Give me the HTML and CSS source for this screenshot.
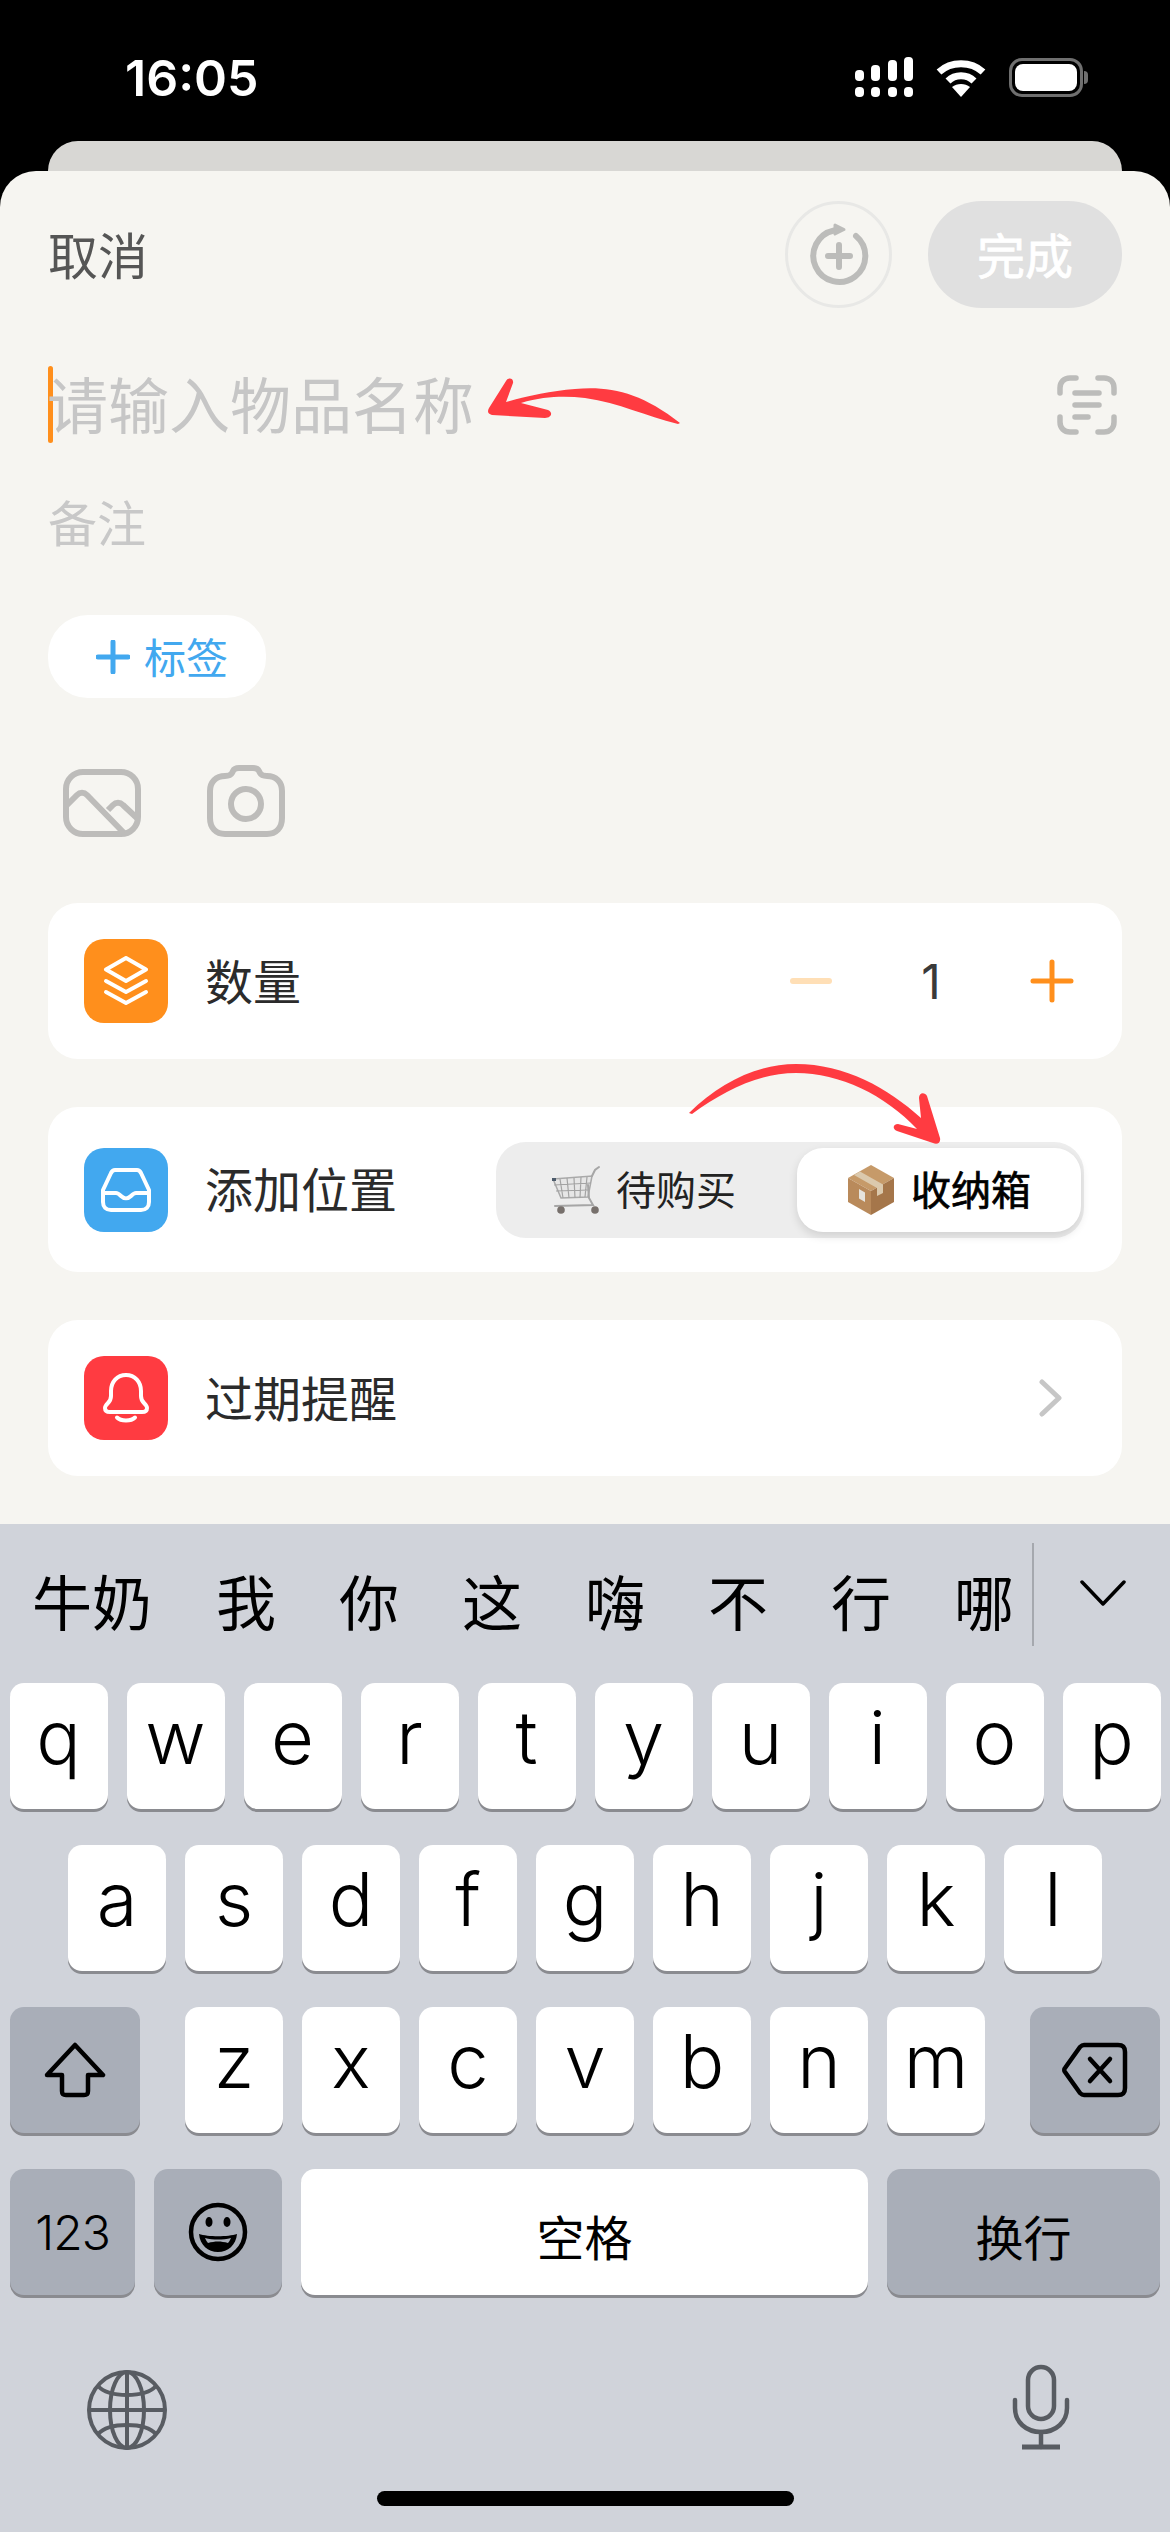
FILE: index.html
```html
<!DOCTYPE html>
<html lang="zh-CN">
<head>
    <meta charset="UTF-8">
    <meta name="viewport" content="width=device-width, initial-scale=1.0">
    <title>添加物品</title>
    <link rel="stylesheet" href="styles.css">
</head>
<body>
    <header class="status-bar">
        <span class="time">16:05</span>
        <div class="status-icons">
            <svg class="signal" width="58" height="40" viewBox="0 0 58 40" fill="#fff">
                <rect x="0" y="13" width="9" height="11" rx="4"/>
                <rect x="16" y="8" width="9" height="16" rx="4"/>
                <rect x="33" y="3" width="9" height="21" rx="4"/>
                <rect x="49" y="0" width="9" height="24" rx="4"/>
                <rect x="0" y="30" width="9" height="10" rx="4"/>
                <rect x="16" y="30" width="9" height="10" rx="4"/>
                <rect x="33" y="30" width="9" height="10" rx="4"/>
                <rect x="49" y="30" width="9" height="10" rx="4"/>
            </svg>
            <svg class="wifi" width="50" height="38" viewBox="0 0 50 38" fill="none" stroke="#fff" stroke-width="7">
                <path d="M3 13C15 2 35 2 47 13"/>
                <path d="M12 22C19 15 31 15 38 22"/>
                <path d="M25 38L16 28C21 24 29 24 34 28Z" fill="#fff" stroke="none"/>
            </svg>
            <div class="battery"><div class="battery-fill"></div></div>
            <div class="battery-nub"></div>
        </div>
    </header>

    <div class="back-sheet"></div>

    <main class="sheet">
        <div class="top-row">
            <span class="cancel">取消</span>
            <div class="top-actions">
                <div class="round-btn">
                    <svg width="60" height="64" viewBox="0 0 60 64" fill="none" stroke="#bcbcba" stroke-width="6" stroke-linecap="round" stroke-linejoin="round">
                        <path d="M47 13A26 26 0 1 1 25 7.5"/>
                        <path d="M26 2L35 6.5L26 11Z" fill="#bcbcba" stroke-width="3"/>
                        <path d="M30 22V44M19 33H41"/>
                    </svg>
                </div>
                <div class="done-btn">完成</div>
            </div>
        </div>

        <div class="name-row">
            <div class="caret"></div>
            <span class="placeholder">请输入物品名称</span>
            <svg class="scan" width="60" height="60" viewBox="0 0 60 60" fill="none" stroke="#bcbcba" stroke-width="5.5" stroke-linecap="round">
                <path d="M3 18V13C3 7 7 3 13 3H19M41 3H47C53 3 57 7 57 13V18M57 42V47C57 53 53 57 47 57H41M19 57H13C7 57 3 53 3 47V42"/>
                <path d="M18 18H42M18 30H42M18 42H31"/>
            </svg>
        </div>

        <div class="note">备注</div>

        <div class="tag-pill">
            <svg width="34" height="34" viewBox="0 0 34 34" stroke="#42a8ef" stroke-width="5" stroke-linecap="round">
                <path d="M17 2V32M2 17H32"/>
            </svg>
            <span class="tag-text">标签</span>
        </div>

        <div class="media-row">
            <svg width="78" height="68" viewBox="0 0 78 68" fill="none" stroke="#bdbcba" stroke-width="6" stroke-linejoin="round">
                <rect x="3" y="3" width="72" height="62" rx="17"/>
                <path d="M3 37L14 26C17 23 21 23 24 26L61 64"/>
                <path d="M45 41L50 36C53 33 57 33 60 36L75 50"/>
            </svg>
            <svg width="78" height="72" viewBox="0 0 78 72" fill="none" stroke="#bdbcba" stroke-width="6" stroke-linejoin="round">
                <path d="M18 11C22 11 24 10 25 8L26 6C27 4 29 3 32 3H46C49 3 51 4 52 6L53 8C54 10 56 11 60 11C69 11 75 17 75 26V53C75 63 69 69 60 69H18C9 69 3 63 3 53V26C3 17 9 11 18 11Z"/>
                <circle cx="39" cy="39" r="15"/>
            </svg>
        </div>

        <section class="card card-qty">
            <div class="card-icon icon-orange">
                <svg width="46" height="50" viewBox="0 0 46 50" fill="none" stroke="#fff" stroke-width="4" stroke-linecap="round" stroke-linejoin="round">
                    <path d="M23 2L43 13.5L23 25L3 13.5Z"/>
                    <path d="M3 25L23 36L43 25"/>
                    <path d="M3 36L23 47L43 36"/>
                </svg>
            </div>
            <span class="card-label">数量</span>
            <div class="stepper">
                <div class="step-minus"></div>
                <span class="step-value">1</span>
                <svg width="44" height="44" viewBox="0 0 44 44" stroke="#ff8f1c" stroke-width="5" stroke-linecap="round">
                    <path d="M22 3V41M3 22H41"/>
                </svg>
            </div>
        </section>

        <section class="card card-place">
            <div class="card-icon icon-blue">
                <svg width="50" height="44" viewBox="0 0 50 44" fill="none" stroke="#fff" stroke-width="4" stroke-linejoin="round">
                    <path d="M14 2H36C38 2 39 3 40 5L48 22V34C48 39 45 42 40 42H10C5 42 2 39 2 34V22L10 5C11 3 12 2 14 2Z"/>
                    <path d="M2 25H15C17 25 18 26 20 28C23 31 27 31 30 28C32 26 33 25 35 25H48"/>
                </svg>
            </div>
            <span class="card-label">添加位置</span>
            <div class="segment">
                <div class="seg-item seg-idle">
                    <svg width="50" height="50" viewBox="0 0 50 50" fill="none">
                        <path d="M1 14L40 11L36 32L9 33Z" fill="#e6e6e6" stroke="#a9a9a9" stroke-width="1.5"/>
                        <path d="M8 14L11 33M15 13L17 33M22 13L23 33M29 12L28 33M35 12L33 32M2 20L39 18M4 26L37 25" stroke="#a3a3a3" stroke-width="1.2"/>
                        <path d="M40 11L43 5L47 2M36 20L37 33L41 40L3 41" stroke="#a6a6a6" stroke-width="2" stroke-linecap="round"/>
                        <circle cx="9" cy="45" r="3.8" fill="#77706c"/>
                        <circle cx="43" cy="45" r="3.8" fill="#77706c"/>
                        <rect x="0" y="13" width="4" height="3" fill="#4d5b6b"/>
                    </svg>
                    <span class="seg-text">待购买</span>
                </div>
                <div class="seg-item seg-active">
                    <svg width="48" height="50" viewBox="0 0 48 50">
                        <path d="M24 0L47 13L24 26L1 13Z" fill="#c69a69"/>
                        <path d="M1 13L24 26V50L1 37Z" fill="#b98a5b"/>
                        <path d="M47 13L24 26V50L47 37Z" fill="#a5764a"/>
                        <path d="M13 6.5L36 19.5L36 28L30 31V23L7 10Z" fill="#dbc9ad"/>
                        <path d="M12 24L18 27.5V37L12 33.5Z" fill="#e6e3dc"/>
                    </svg>
                    <span class="seg-text">收纳箱</span>
                </div>
            </div>
        </section>

        <section class="card card-expire">
            <div class="card-icon icon-red">
                <svg width="46" height="50" viewBox="0 0 46 50" fill="none" stroke="#fff" stroke-width="4" stroke-linecap="round" stroke-linejoin="round">
                    <path d="M23 2C32 2 38 9 38 18V23C38 26 39 28 41 30C43 32 44 34 44 35C44 38 42 39 39 39H7C4 39 2 38 2 35C2 34 3 32 5 30C7 28 8 26 8 23V18C8 9 14 2 23 2Z"/>
                    <path d="M14 44.5C18 48.5 28 48.5 32 44.5"/>
                </svg>
            </div>
            <span class="card-label">过期提醒</span>
            <svg class="chevron" width="24" height="38" viewBox="0 0 24 38" fill="none" stroke="#c6c6c6" stroke-width="5" stroke-linecap="round" stroke-linejoin="round">
                <path d="M3 3L20 19L3 35"/>
            </svg>
        </section>
    </main>

    <section class="keyboard">
        <div class="candidates">
            <span class="cand cand-first">牛奶</span>
            <span class="cand">我</span>
            <span class="cand">你</span>
            <span class="cand">这</span>
            <span class="cand">嗨</span>
            <span class="cand">不</span>
            <span class="cand">行</span>
            <span class="cand">哪</span>
            <div class="cand-more">
                <svg width="46" height="26" viewBox="0 0 46 26" fill="none" stroke="#000" stroke-width="3.5" stroke-linecap="round" stroke-linejoin="round">
                    <path d="M2 2L23 24L44 2"/>
                </svg>
            </div>
        </div>

        <div class="keys">
            <div class="key-row">
                <div class="key">q</div><div class="key">w</div><div class="key">e</div><div class="key">r</div><div class="key">t</div>
                <div class="key">y</div><div class="key">u</div><div class="key">i</div><div class="key">o</div><div class="key">p</div>
            </div>
            <div class="key-row">
                <div class="key">a</div><div class="key">s</div><div class="key">d</div><div class="key">f</div><div class="key">g</div>
                <div class="key">h</div><div class="key">j</div><div class="key">k</div><div class="key">l</div>
            </div>
            <div class="key-row row-split">
                <div class="key key-dark key-side">
                    <svg width="62" height="56" viewBox="0 0 62 56" fill="none" stroke="#000" stroke-width="4.5" stroke-linejoin="round">
                        <path d="M31 3L59 33H44V49C44 52 43 53 40 53H22C19 53 18 52 18 49V33H3Z"/>
                    </svg>
                </div>
                <div class="key-group">
                    <div class="key">z</div><div class="key">x</div><div class="key">c</div><div class="key">v</div>
                    <div class="key">b</div><div class="key">n</div><div class="key">m</div>
                </div>
                <div class="key key-dark key-side">
                    <svg width="66" height="56" viewBox="0 0 66 56" fill="none" stroke="#000" stroke-width="4.5" stroke-linejoin="round" stroke-linecap="round">
                        <path d="M22 3H56C61 3 63 5 63 10V46C63 51 61 53 56 53H22C20 53 19 52 18 51L3 30C2 29 2 27 3 26L18 5C19 4 20 3 22 3Z"/>
                        <path d="M28 17L48 39M48 17L28 39"/>
                    </svg>
                </div>
            </div>
            <div class="key-row">
                <div class="key key-dark key-num">123</div>
                <div class="key key-dark key-emoji">
                    <svg width="60" height="60" viewBox="0 0 60 60" fill="none" stroke="#000" stroke-width="4.5">
                        <circle cx="30" cy="30" r="27"/>
                        <ellipse cx="21" cy="20" rx="3.5" ry="5" fill="#000" stroke="none"/>
                        <ellipse cx="39" cy="20" rx="3.5" ry="5" fill="#000" stroke="none"/>
                        <path d="M11 32C20 35 40 35 49 32C48 43 40 50 30 50C20 50 12 43 11 32Z" fill="#000" stroke="none"/>
                        <path d="M17 36C25 38 35 38 43 36C42 38 41 40 40 41C33 39 27 39 20 41C19 40 18 38 17 36Z" fill="#a9aeb8" stroke="none"/>
                    </svg>
                </div>
                <div class="key key-space">空格</div>
                <div class="key key-dark key-return">换行</div>
            </div>
        </div>

        <div class="kb-bottom">
            <svg width="80" height="80" viewBox="0 0 80 80" fill="none" stroke="#585c62" stroke-width="4">
                <circle cx="40" cy="40" r="38"/>
                <ellipse cx="40" cy="40" rx="17" ry="38"/>
                <path d="M40 2V78M2 40H78"/>
                <path d="M11 16C22 28 58 28 69 16M11 64C22 52 58 52 69 64"/>
            </svg>
            <svg width="58" height="86" viewBox="0 0 58 86" fill="none" stroke="#585c62" stroke-width="4.5" stroke-linecap="round">
                <rect x="16" y="3" width="26" height="52" rx="13"/>
                <path d="M3 36V44C3 58 14 68 29 68C44 68 55 58 55 44V36"/>
                <path d="M29 68V83"/>
                <path d="M10 83H48" stroke-linecap="butt" stroke-width="5"/>
            </svg>
        </div>
        <div class="home-bar"></div>
    </section>

    <svg class="annotations" width="1170" height="2532" viewBox="0 0 1170 2532" fill="#ff3b41">
        <path d="M680 423C640 392 610 386 575 389C550 391 528 396 506 402L513 383C514 378 508 377 506 381L489 408C487 412 488 414 492 415L545 418C552 418 553 412 548 410L521 403C545 396 565 396 585 398C620 403 645 416 678 424Z"/>
        <path d="M689 1113C720 1082 758 1064 796 1064C845 1064 888 1088 921 1118L919 1098C919 1092 925 1092 927 1096L940 1138C941 1143 937 1145 933 1143L897 1131C892 1129 893 1124 898 1124L917 1129C885 1095 840 1073 796 1073C760 1073 725 1090 692 1114Z"/>
    </svg>
</body>
</html>
```

FILE: styles.css
```css
* {
    box-sizing: border-box;
}

body {
    position: relative;
    margin: 0;
    width: 1170px;
    height: 2532px;
    overflow: hidden;
    background-color: #000;
    font-family: "Liberation Sans", "Noto Sans CJK SC", sans-serif;
    color: #000;
}

.status-bar {
    height: 141px;
    padding: 0 82px 0 125px;
    display: flex;
    justify-content: space-between;
    align-items: flex-start;
    color: #fff;
}

.time {
    margin-top: 49px;
    font-family: Inter, sans-serif;
    font-size: 50px;
    line-height: 58px;
    font-weight: 600;
}

.status-icons {
    margin-top: 57px;
    display: flex;
    align-items: flex-start;
}

.wifi {
    margin: 2px 0 0 23px;
}

.battery {
    width: 74px;
    height: 39px;
    margin: 1px 0 0 23px;
    padding: 3px;
    border: 3px solid #6f6f6f;
    border-radius: 13px;
}

.battery-fill {
    height: 100%;
    background-color: #fff;
    border-radius: 8px;
}

.battery-nub {
    width: 4px;
    height: 13px;
    margin: 14px 0 0 1px;
    background-color: #6f6f6f;
    border-radius: 0 4px 4px 0;
}

.back-sheet {
    height: 30px;
    margin: 0 48px;
    background-color: #d8d7d4;
    border-radius: 30px 30px 0 0;
}

.sheet {
    height: 1353px;
    padding: 30px 48px 0;
    background-color: #f6f5f1;
    border-radius: 36px 36px 0 0;
}

.top-row {
    height: 107px;
    display: flex;
    justify-content: space-between;
    align-items: center;
}

.cancel {
    padding-bottom: 4px;
    font-size: 50px;
    color: #555;
}

.top-actions {
    display: flex;
    gap: 36px;
}

.round-btn {
    width: 107px;
    height: 107px;
    display: flex;
    align-items: center;
    justify-content: center;
    border: 3px solid #e8e8e6;
    border-radius: 50%;
}

.done-btn {
    width: 194px;
    height: 107px;
    padding-bottom: 3px;
    display: flex;
    align-items: center;
    justify-content: center;
    background-color: #e0e0e0;
    border-radius: 54px;
    font-size: 48px;
    color: #fff;
    -webkit-text-stroke: 0.8px #fff;
}

.name-row {
    height: 77px;
    margin-top: 58px;
    display: flex;
    align-items: center;
}

.caret {
    width: 5px;
    height: 77px;
    background-color: #ff8f1c;
    border-radius: 3px;
}

.placeholder {
    margin-left: -6px;
    padding-bottom: 5px;
    font-size: 61px;
    color: #c6c6c6;
}

.scan {
    margin-left: auto;
    margin-right: 5px;
}

.note {
    margin-top: 56px;
    font-size: 49px;
    line-height: 52px;
    color: #c8c8c8;
}

.tag-pill {
    width: 218px;
    height: 83px;
    margin-top: 64px;
    padding-left: 10px;
    display: flex;
    align-items: center;
    justify-content: center;
    gap: 14px;
    background-color: #fff;
    border-radius: 40px;
    font-size: 42px;
    color: #42a8ef;
}

.tag-text {
    padding-bottom: 3px;
}

.media-row {
    margin-top: 67px;
    padding-left: 15px;
    display: flex;
    align-items: flex-end;
    gap: 66px;
}

.card {
    margin-top: 48px;
    padding: 0 36px;
    display: flex;
    align-items: center;
    background-color: #fff;
    border-radius: 30px;
}

.media-row + .card {
    margin-top: 66px;
}

.card-qty {
    height: 156px;
}

.card-place {
    height: 165px;
    padding-right: 38px;
}

.card-expire {
    height: 156px;
    padding-right: 59px;
}

.card-icon {
    width: 84px;
    height: 84px;
    display: flex;
    align-items: center;
    justify-content: center;
    border-radius: 20px;
}

.icon-orange {
    background-color: #ff8f1c;
}

.icon-blue {
    background-color: #42a8ef;
}

.icon-red {
    background-color: #ff3b41;
}

.card-label {
    margin-left: 37px;
    padding-bottom: 5px;
    font-size: 48px;
    color: #2b2b2b;
}

.stepper {
    margin-left: auto;
    margin-right: 12px;
    display: flex;
    align-items: center;
}

.step-minus {
    width: 42px;
    height: 6px;
    background-color: #ffdfb6;
    border-radius: 3px;
}

.step-value {
    width: 198px;
    text-align: center;
    font-family: Inter, sans-serif;
    font-size: 48px;
    color: #3a3a3a;
}

.segment {
    width: 588px;
    height: 96px;
    margin-left: auto;
    padding: 6px 3px 6px 0;
    display: flex;
    background-color: #ededed;
    border-radius: 30px;
}

.seg-item {
    flex: 1;
    display: flex;
    align-items: center;
    justify-content: center;
    gap: 16px;
    font-size: 40px;
    color: #222;
}

.seg-idle {
    gap: 14px;
    padding-right: 5px;
}

.seg-text {
    padding-bottom: 4px;
}

.seg-active {
    flex: none;
    width: 284px;
    background-color: #fff;
    border-radius: 26px;
    box-shadow: 0 4px 10px rgba(0, 0, 0, 0.12);
    color: #000;
    -webkit-text-stroke: 0.7px #000;
}

.chevron {
    margin-left: auto;
}

.keyboard {
    height: 1008px;
    background-color: #d0d3da;
}

.candidates {
    height: 159px;
    padding: 0 0 8px 32px;
    display: flex;
    align-items: center;
    font-size: 60px;
    color: #000;
}

.cand {
    width: 60px;
    margin-right: 63px;
    text-align: center;
}

.cand-first {
    width: 120px;
    margin-right: 64px;
}

.cand-more {
    height: 103px;
    margin: 19px 0 0 -45px;
    padding: 37px 0 0 46px;
    display: flex;
    align-items: flex-start;
    align-self: flex-start;
    border-left: 2px solid #a5a8ae;
}

.keys {
    display: flex;
    flex-direction: column;
    gap: 36px;
}

.key-row {
    display: flex;
    justify-content: center;
    gap: 19px;
}

.row-split {
    justify-content: space-between;
    padding: 0 10px;
}

.key-group {
    display: flex;
    gap: 19px;
}

.key {
    width: 98px;
    height: 126px;
    padding-bottom: 18px;
    display: flex;
    align-items: center;
    justify-content: center;
    background-color: #fff;
    border-radius: 14px;
    box-shadow: 0 3px 0 #8a8b90;
    font-family: Inter, sans-serif;
    font-size: 74px;
    font-weight: 300;
}

.key-dark {
    background-color: #a9aeb8;
}

.key-side {
    width: 130px;
    padding-bottom: 0;
}

.key-num {
    width: 125px;
    padding-bottom: 0;
    font-size: 48px;
    letter-spacing: -1px;
}

.key-emoji {
    width: 128px;
    padding-bottom: 0;
}

.key-space {
    width: 567px;
    padding: 5px 0 0;
    font-family: "Liberation Sans", "Noto Sans CJK SC", sans-serif;
    font-size: 48px;
    font-weight: 400;
}

.key-return {
    width: 273px;
    padding: 5px 0 0;
    font-family: "Liberation Sans", "Noto Sans CJK SC", sans-serif;
    font-size: 48px;
    font-weight: 400;
}

.kb-bottom {
    margin-top: 70px;
    padding: 0 100px 0 87px;
    height: 85px;
    display: flex;
    justify-content: space-between;
    align-items: flex-end;
}

.home-bar {
    width: 417px;
    height: 15px;
    margin: 41px auto 0;
    background-color: #000;
    border-radius: 8px;
}

/* red hand drawn arrows lie over the form */
.annotations {
    position: absolute;
    left: 0;
    top: 0;
    pointer-events: none;
}
```
